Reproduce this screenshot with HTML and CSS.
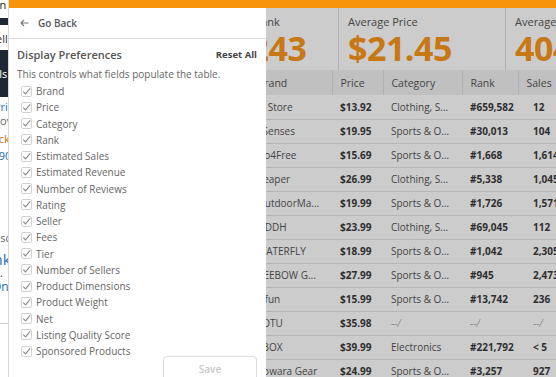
FILE: index.html
```html
<!DOCTYPE html>
<html lang="en">
<head>
    <meta charset="UTF-8">
    <meta name="viewport" content="width=device-width, initial-scale=1.0">
    <title>Product Research</title>
    <link rel="stylesheet" href="styles.css">
</head>
<body>
    <!-- host page, mostly hidden behind the extension -->
    <div class="site">
        <div class="site-inner">
            <div class="s-logo">on</div>
            <div class="s-nav"></div>
            <div class="s-title">Seller</div>
            <div class="s-band"><span>Tools</span></div>
            <div class="s-link s-price">Price</div>
            <div class="s-muted">Prov</div>
            <div class="s-deal">Pack'</div>
            <div class="s-link s-amount">$19.90</div>
            <div class="s-muted s-desc">Desc</div>
            <div class="s-link s-big">Link</div>
            <div class="s-dot">.</div>
            <div class="s-link s-on">On</div>
            <div class="s-rule"></div>
        </div>
    </div>

    <div class="app">
        <div class="app-bar"></div>
        <div class="app-body">
            <div class="dashboard">
                <div class="stats">
                    <div class="stat">
                        <div class="stat-label">Average Reviews</div>
                        <div class="stat-value">1,245</div>
                    </div>
                    <div class="stat">
                        <div class="stat-label">Average Sales Rank</div>
                        <div class="stat-value">#56,243</div>
                    </div>
                    <div class="stat">
                        <div class="stat-label">Average Price</div>
                        <div class="stat-value">$21.45</div>
                    </div>
                    <div class="stat">
                        <div class="stat-label">Average Sales</div>
                        <div class="stat-value">404</div>
                    </div>
                </div>

                <table class="products">
                    <colgroup>
                        <col class="c-product">
                        <col class="c-brand">
                        <col class="c-price">
                        <col class="c-category">
                        <col class="c-rank">
                        <col class="c-sales">
                    </colgroup>
                    <thead>
                        <tr>
                            <th>Product</th>
                            <th>Brand</th>
                            <th>Price</th>
                            <th>Category</th>
                            <th>Rank</th>
                            <th>Sales</th>
                        </tr>
                    </thead>
                    <tbody id="rows"></tbody>
                </table>
            </div>

            <div class="dim"></div>

            <aside class="drawer">
                <div class="back">
                    <svg width="9" height="8" viewBox="0 0 9 8"><path d="M8.5 4H1M4 1L1 4l3 3" fill="none" stroke="#777" stroke-width="1.1"/></svg>
                    <span>Go Back</span>
                </div>
                <div class="prefs">
                    <div class="prefs-head">
                        <h2>Display Preferences</h2>
                        <a class="reset">Reset All</a>
                    </div>
                    <p class="prefs-note">This controls what fields populate the table.</p>
                    <ul class="pref-list" id="prefList"></ul>
                    <div class="prefs-foot">
                        <button class="save" disabled>Save</button>
                    </div>
                </div>
            </aside>
        </div>
    </div>

    <script>
        const fields = ['Brand', 'Price', 'Category', 'Rank', 'Estimated Sales', 'Estimated Revenue',
            'Number of Reviews', 'Rating', 'Seller', 'Fees', 'Tier', 'Number of Sellers',
            'Product Dimensions', 'Product Weight', 'Net', 'Listing Quality Score', 'Sponsored Products'];

        const products = [
            ['Hiking Pants for Men', 'JS Store', '$13.92', 'Clothing, S...', '#659,582', '12'],
            ['Yoga Mat Towel', 'ESenses', '$19.95', 'Sports & O...', '#30,013', '104'],
            ['Camping Hammock', 'Go4Free', '$15.69', 'Sports & O...', '#1,668', '1,614'],
            ['Rain Jacket', 'Reaper', '$26.99', 'Clothing, S...', '#5,338', '1,045'],
            ['Dry Bag 20L', 'OutdoorMa...', '$19.99', 'Sports & O...', '#1,726', '1,571'],
            ['Fleece Hoodie', 'ODDH', '$23.99', 'Clothing, S...', '#69,045', '112'],
            ['Hydration Pack', 'WATERFLY', '$18.99', 'Sports & O...', '#1,042', '2,305'],
            ['Trekking Poles', 'BEEBOW G...', '$27.99', 'Sports & O...', '#945', '2,473'],
            ['Beach Blanket', 'Icfun', '$15.99', 'Sports & O...', '#13,742', '236'],
            ['Sleeping Pad', 'LOTU', '$35.98', null, null, null],
            ['Action Camera', 'TBOX', '$39.99', 'Electronics', '#221,792', '< 5'],
            ['Ultralight Tent', 'Kowara Gear', '$24.99', 'Sports & O...', '#3,257', '927']
        ];

        const check = '<svg width="11" height="11" viewBox="0 0 11 11"><rect x="0.5" y="0.5" width="10" height="10" rx="1.5" fill="#fff" stroke="#d2d2d2"/><path d="M2.3 5.6l2.2 2.3L9.2 2.4" fill="none" stroke="#8a8a8a" stroke-width="1.1"/></svg>';

        document.getElementById('prefList').innerHTML = fields
            .map(f => `<li class="pref">${check}<span>${f}</span></li>`)
            .join('');

        const empty = '<span class="na">--/</span>';
        document.getElementById('rows').innerHTML = products.map(p => `
            <tr>
                <td>${p[0]}</td>
                <td>${p[1]}</td>
                <td class="strong">${p[2]}</td>
                <td>${p[3] || empty}</td>
                <td class="strong">${p[4] || empty}</td>
                <td class="strong sales">${p[5] || empty}</td>
            </tr>`).join('');
    </script>
</body>
</html>
```

FILE: styles.css
```css
body {
    font-family: 'Open Sans', 'Liberation Sans', sans-serif;
    margin: 0;
    height: 377px;
    overflow: hidden;
    display: flex;
    background-color: white;
}

/* host page strip */
.site {
    width: 8px;
    flex: none;
    overflow: hidden;
    font-size: 11px;
    line-height: 12px;
    white-space: nowrap;
}
.site-inner {
    width: 60px;
}
.s-logo {
    height: 18px;
    color: #222;
    text-indent: -7px;
    line-height: 9px;
}
.s-nav {
    height: 7px;
    background-color: #1e2835;
}
.s-title {
    margin-top: 8px;
    height: 13px;
    color: #333;
    text-indent: -10px;
}
.s-band {
    margin-top: 4px;
    height: 47px;
    background-color: #1e2835;
    color: white;
    padding-top: 18px;
    box-sizing: border-box;
    text-indent: -20px;
}
.s-link {
    color: #1b6fb5;
}
.s-price {
    margin-top: 4px;
    text-indent: -6px;
}
.s-muted {
    color: #666;
    text-indent: -11px;
    margin-top: 2px;
}
.s-deal {
    color: #c7700f;
    margin-top: 6px;
    text-indent: -14px;
}
.s-amount {
    margin-top: 5px;
    text-indent: -23px;
}
.s-desc {
    margin-top: 70px;
    text-indent: -14px;
}
.s-big {
    font-size: 15px;
    line-height: 16px;
    margin-top: 7px;
    text-indent: -18px;
}
.s-dot {
    color: #333;
    height: 12px;
}
.s-on {
    font-size: 12px;
    text-indent: -8px;
    margin-top: 2px;
}
.s-rule {
    margin-top: 30px;
    border-top: 1px solid #ccc;
}

/* extension */
.app {
    flex: 1;
    min-width: 0;
    display: flex;
    flex-direction: column;
    border-left: 1px solid #d8d8d8;
}
.app-bar {
    height: 8px;
    background-color: #f8930c;
    flex: none;
}
.app-body {
    flex: 1;
    position: relative;
    overflow: hidden;
}
.dashboard {
    width: 700px;
}
.stats {
    display: grid;
    grid-template-columns: 163px 167px 167px 167px;
    height: 62px;
}
.stat {
    border-right: 1px solid #dcdcdc;
    padding: 7px 9px 0;
}
.stat-label {
    font-size: 11px;
    color: #555;
    line-height: 14px;
}
.stat-value {
    font-size: 34px;
    font-weight: 700;
    color: #f9961a;
    line-height: 38px;
    letter-spacing: -0.5px;
}

.products {
    border-collapse: collapse;
    table-layout: fixed;
    width: 589px;
    font-size: 10px;
    color: #555;
}
.c-product { width: 240px; }
.c-brand { width: 83px; }
.c-price { width: 51px; }
.c-category { width: 79px; }
.c-rank { width: 56px; }
.c-sales { width: 80px; }
.products th {
    height: 25px;
    padding: 0 8px;
    text-align: left;
    font-weight: normal;
    font-size: 10.5px;
    color: #555;
    background-color: #f1f1f1;
    border-right: 1px solid #dddddd;
    box-sizing: border-box;
}
.products td {
    height: 24px;
    padding: 0 8px;
    border-bottom: 1px solid #e4e4e4;
    white-space: nowrap;
    overflow: hidden;
    box-sizing: border-box;
}
.products td.strong {
    font-weight: 700;
    color: #3a3a3a;
}
.products td.sales {
    padding-left: 15px;
}
.na {
    color: #b0b0b0;
    font-weight: normal;
    font-style: italic;
}

.dim {
    position: absolute;
    inset: 0;
    background-color: rgba(0, 0, 0, 0.2);
}

/* preferences drawer */
.drawer {
    position: absolute;
    top: 0;
    left: 0;
    bottom: 0;
    width: 257px;
    background-color: white;
    color: #555;
}
.back {
    height: 30px;
    display: flex;
    align-items: center;
    gap: 9px;
    padding-left: 11px;
    border-bottom: 1px solid #dedede;
    font-size: 10px;
    font-weight: 600;
}
.prefs {
    padding: 8px 9px 0 8px;
}
.prefs-head {
    display: flex;
    justify-content: space-between;
    align-items: center;
    height: 14px;
}
.prefs-head h2 {
    margin: 0;
    font-size: 11px;
    font-weight: 600;
    color: #555;
}
.reset {
    font-size: 9.5px;
    font-weight: 700;
    color: #444;
}
.prefs-note {
    margin: 7px 0 0;
    font-size: 10px;
    line-height: 12px;
    color: #666;
}
.pref-list {
    list-style: none;
    margin: 3px 0 0;
    padding: 0 0 0 4px;
}
.pref {
    height: 16.25px;
    display: flex;
    align-items: center;
    gap: 4px;
    font-size: 10px;
    color: #666;
}
.pref svg {
    flex: none;
}
.prefs-foot {
    display: flex;
    justify-content: flex-end;
    margin-top: -3px;
}
.save {
    width: 94px;
    height: 26px;
    background-color: white;
    border: 1px solid #dcdcdc;
    border-radius: 4px;
    font-family: inherit;
    font-size: 10px;
    font-weight: 600;
    color: #c8c8c8;
}
```
